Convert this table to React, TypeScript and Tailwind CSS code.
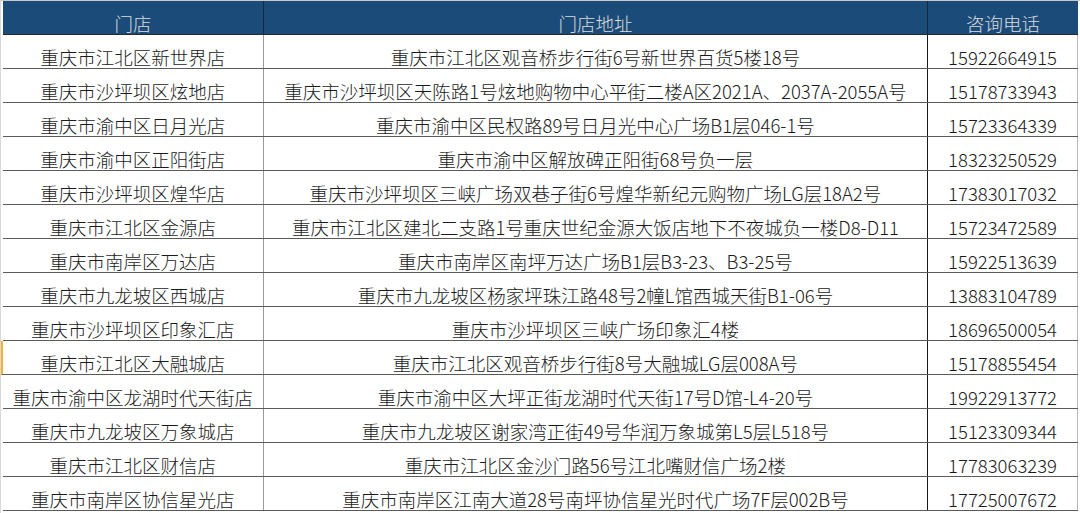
import React from 'react';

const stores = [
  ['重庆市江北区新世界店', '重庆市江北区观音桥步行街6号新世界百货5楼18号', '15922664915'],
  ['重庆市沙坪坝区炫地店', '重庆市沙坪坝区天陈路1号炫地购物中心平街二楼A区2021A、2037A-2055A号', '15178733943'],
  ['重庆市渝中区日月光店', '重庆市渝中区民权路89号日月光中心广场B1层046-1号', '15723364339'],
  ['重庆市渝中区正阳街店', '重庆市渝中区解放碑正阳街68号负一层', '18323250529'],
  ['重庆市沙坪坝区煌华店', '重庆市沙坪坝区三峡广场双巷子街6号煌华新纪元购物广场LG层18A2号', '17383017032'],
  ['重庆市江北区金源店', '重庆市江北区建北二支路1号重庆世纪金源大饭店地下不夜城负一楼D8-D11', '15723472589'],
  ['重庆市南岸区万达店', '重庆市南岸区南坪万达广场B1层B3-23、B3-25号', '15922513639'],
  ['重庆市九龙坡区西城店', '重庆市九龙坡区杨家坪珠江路48号2幢L馆西城天街B1-06号', '13883104789'],
  ['重庆市沙坪坝区印象汇店', '重庆市沙坪坝区三峡广场印象汇4楼', '18696500054'],
  ['重庆市江北区大融城店', '重庆市江北区观音桥步行街8号大融城LG层008A号', '15178855454'],
  ['重庆市渝中区龙湖时代天街店', '重庆市渝中区大坪正街龙湖时代天街17号D馆-L4-20号', '19922913772'],
  ['重庆市九龙坡区万象城店', '重庆市九龙坡区谢家湾正街49号华润万象城第L5层L518号', '15123309344'],
  ['重庆市江北区财信店', '重庆市江北区金沙门路56号江北嘴财信广场2楼', '17783063239'],
  ['重庆市南岸区协信星光店', '重庆市南岸区江南大道28号南坪协信星光时代广场7F层002B号', '17725007672'],
];

export default function App() {
  return (
    <div
      className="w-[1080px] h-[513px] overflow-hidden bg-white border-t border-[#c8c8c8] pl-[2px] pr-[2px] border-l border-l-[#d8d8d8] text-[18.5px] leading-[22px] font-light text-[#1a1a1a]"
      style={{ fontFamily: '"Noto Sans CJK SC", "Liberation Sans", sans-serif' }}
    >
      {/* Header */}
      <div className="flex h-[34px] bg-[#1b4b78] text-[#dcdcdc] border-b border-[#2a2a2a]">
        <div className="w-[261px] border-r border-[#14283d] flex items-end justify-center">门店</div>
        <div className="w-[665px] border-r border-[#14283d] flex items-end justify-center">门店地址</div>
        <div className="w-[150px] flex items-end justify-center">咨询电话</div>
      </div>

      {stores.map(([name, address, phone], i) => (
        <div
          key={i}
          className={
            i === 9
              ? 'flex h-[34px] border-b border-[#5a5a5a] -ml-[2px] border-l-2 border-l-[#f2b233]'
              : 'flex h-[34px] border-b border-[#5a5a5a]'
          }
        >
          <div className="w-[261px] border-r border-[#9a9a9a] flex items-end justify-center whitespace-nowrap">
            {name}
          </div>
          <div className="w-[665px] border-r border-[#1a1a1a] flex items-end justify-center whitespace-nowrap">
            {address}
          </div>
          <div className="w-[150px] border-r border-[#b8b8b8] flex items-end justify-center whitespace-nowrap">
            {phone}
          </div>
        </div>
      ))}
    </div>
  );
}
